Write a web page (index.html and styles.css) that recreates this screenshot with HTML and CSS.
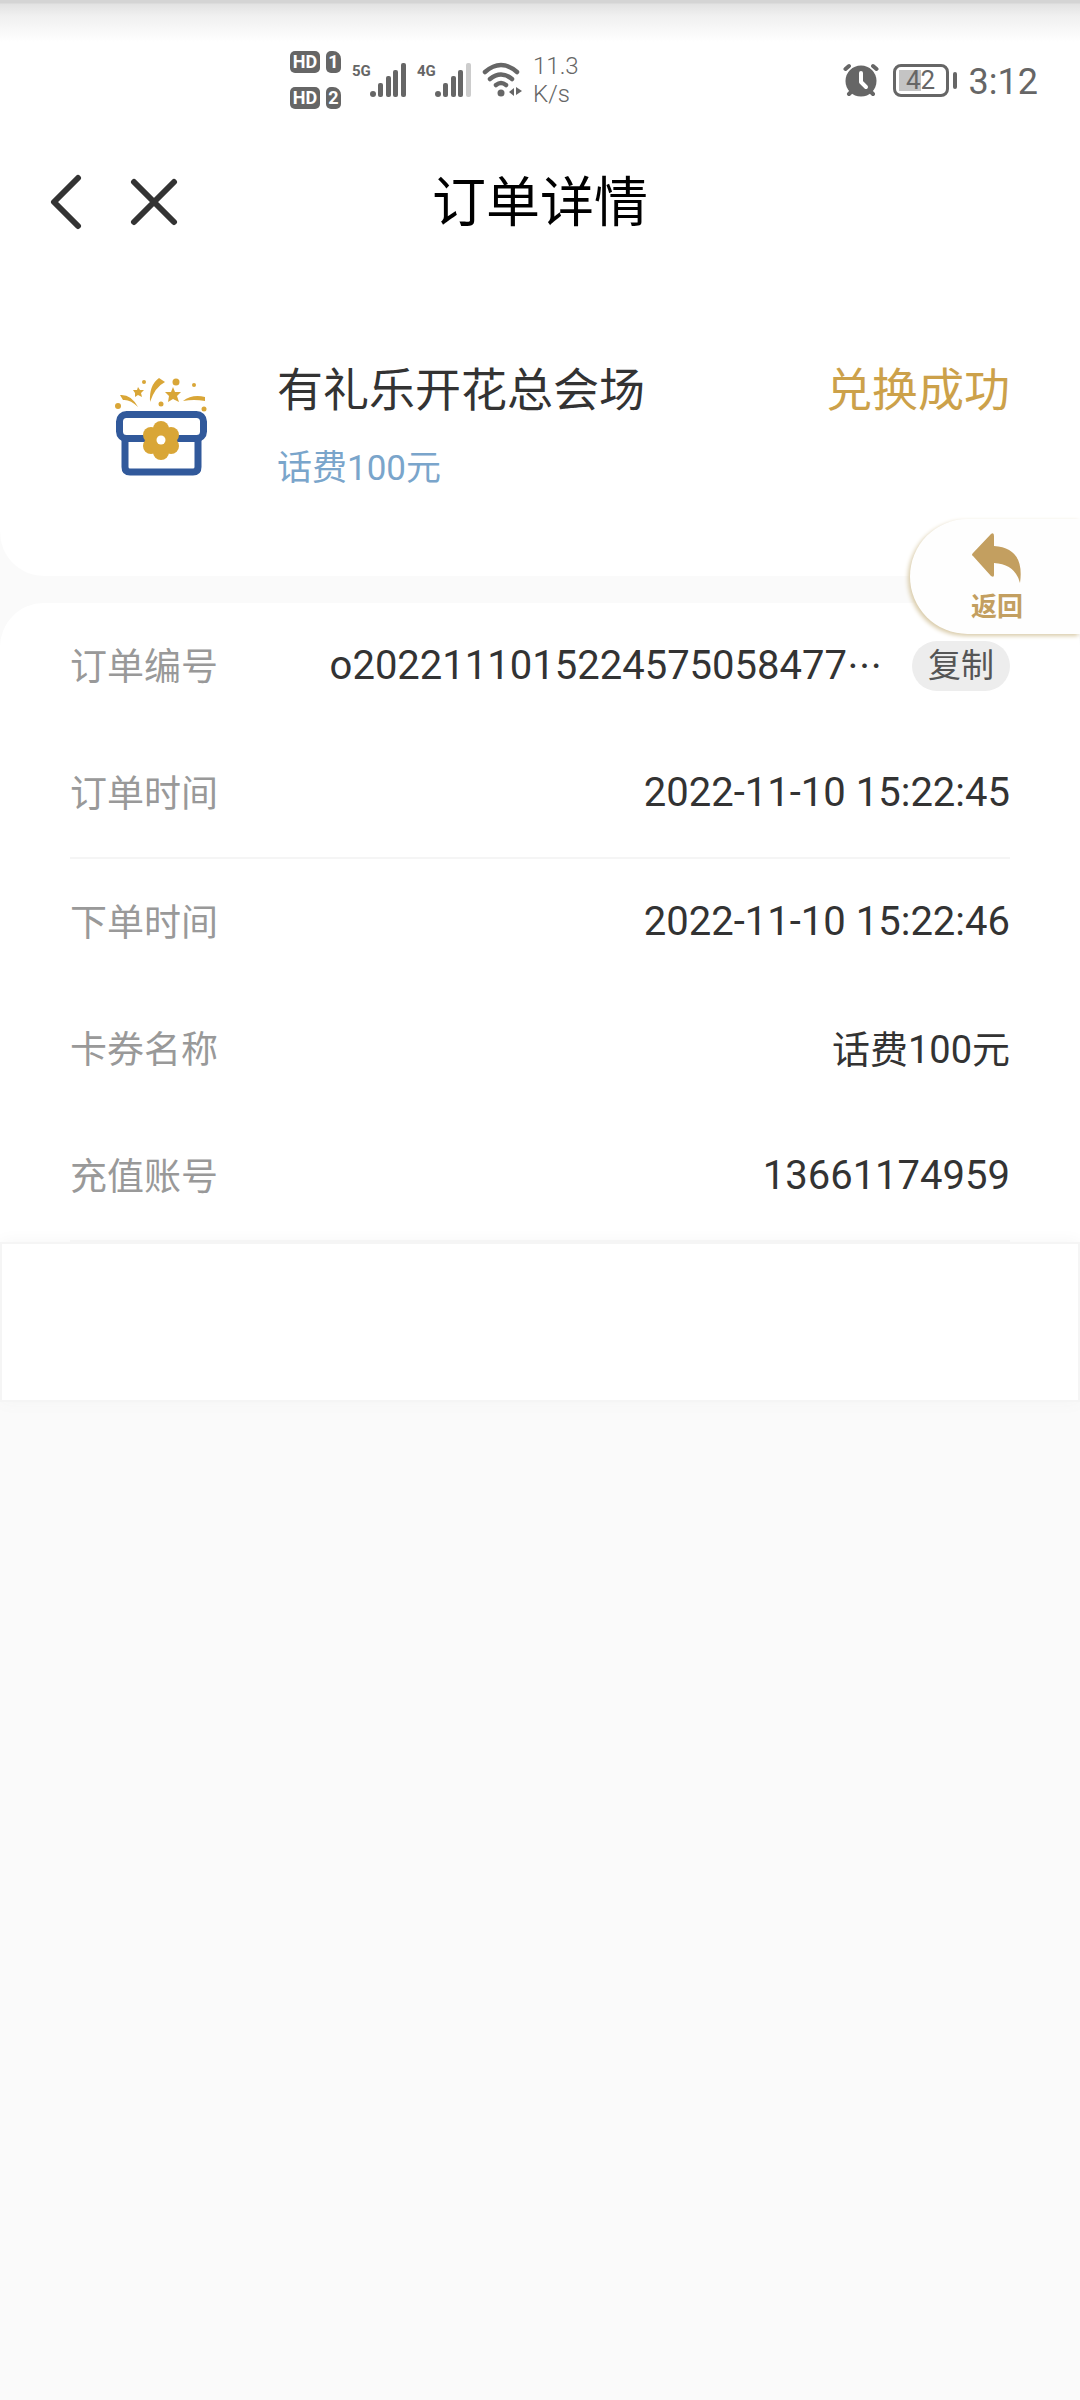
FILE: index.html
```html
<!DOCTYPE html>
<html lang="zh-CN">
<head>
<meta charset="utf-8">
<meta name="viewport" content="width=device-width, initial-scale=1">
<title>订单详情</title>
<link rel="stylesheet" href="styles.css">
</head>
<body>
<div class="top">
  <div class="status-bar">
    <div class="status-group">
      <div class="hd-list">
        <div class="hd"><span class="hd-tag">HD</span><span class="sim-tag">1</span></div>
        <div class="hd"><span class="hd-tag">HD</span><span class="sim-tag">2</span></div>
      </div>
      <div class="signal"><span class="net">5G</span>
        <svg width="36" height="34" viewBox="0 0 36 34" fill="#666"><circle cx="3" cy="31" r="3"/><rect x="8" y="20" width="5" height="14" rx="2"/><rect x="16" y="13" width="5" height="21" rx="2"/><rect x="23" y="7" width="5" height="27" rx="2"/><rect x="31" y="0" width="5" height="34" rx="2"/></svg>
      </div>
      <div class="signal"><span class="net">4G</span>
        <svg width="36" height="34" viewBox="0 0 36 34" fill="#666"><circle cx="3" cy="31" r="3"/><rect x="8" y="20" width="5" height="14" rx="2"/><rect x="16" y="13" width="5" height="21" rx="2"/><rect x="23" y="7" width="5" height="27" rx="2"/><rect x="31" y="0" width="5" height="34" rx="2" fill="#ccc"/></svg>
      </div>
      <svg width="40" height="36" viewBox="0 0 40 36" fill="none" stroke="#666" stroke-width="4.500" stroke-linecap="round"><path d="M3 10Q19-4 35 10M8 17Q19 8 30 17M14 23Q19 19 24 23"/><circle cx="19" cy="31" r="3.500" fill="#666" stroke="none"/><path d="M32 26v8l-5-4zM34 25v8l6-4z" fill="#666" stroke="none"/></svg>
      <div class="speed">11.3<br>K/s</div>
    </div>
    <div class="status-right">
      <svg width="36" height="34" viewBox="0 0 36 34"><g stroke="#666" stroke-width="4" stroke-linecap="round"><path d="M2.500 6L6 3M33.500 6L30 3M6 31l4-4M30 31l-4-4"/></g><circle cx="18" cy="18" r="15.500" fill="#666"/><path d="M18 10v9l5 5" fill="none" stroke="#fff" stroke-width="4" stroke-linecap="round" stroke-linejoin="round"/></svg>
      <div class="battery">42</div>
      <span class="clock">3:12</span>
    </div>
  </div>
  <header class="nav">
    <div class="nav-actions">
      <button class="icon-button" aria-label="后退"><svg width="32" height="56" viewBox="0 0 32 56"><path d="M28 4L4 28l24 24"/></svg></button>
      <button class="icon-button" aria-label="关闭"><svg width="48" height="48" viewBox="0 0 48 48"><path d="M4 4l40 40M44 4L4 44"/></svg></button>
    </div>
    <h1>订单详情</h1>
  </header>
  <section class="product">
    <svg class="gift" width="94" height="98" viewBox="0 0 94 98">
      <g fill="none" stroke="#31599b" stroke-width="7"><rect x="4.500" y="36.500" width="84" height="24" rx="7"/><path d="M10 60v29q0 5 5 5h63q5 0 5-5V60"/></g>
      <g fill="#d9a637"><circle cx="46" cy="51" r="8"/><circle cx="56" cy="57" r="8"/><circle cx="56" cy="68" r="8"/><circle cx="46" cy="74" r="8"/><circle cx="36" cy="68" r="8"/><circle cx="36" cy="57" r="8"/><circle cx="46" cy="62" r="13"/>
      <circle cx="3" cy="28" r="3"/><circle cx="29" cy="4" r="2"/><circle cx="61" cy="4" r="3.500"/><circle cx="79" cy="7" r="2"/><circle cx="46" cy="26" r="2.500"/><circle cx="89" cy="31" r="2.500"/>
      <path d="M5 17Q16 16 23 29Q15 21 8 22zM35 24Q34 7 44 0L50 4Q40 9 35 24zM68 23Q77 16 90 19V23Q79 21 68 23z"/>
      <path d="M58 9l2 5 6 0-4 4 2 6-6-3-5 3 1-6-4-4 6 0zM23 9l2 3 4 0-3 3 1 4-4-2-3 2 0-4-2-3 4 0z"/></g>
      <circle cx="46" cy="62" r="4.500" fill="#fff"/>
    </svg>
    <div class="product-info"><h2>有礼乐开花总会场</h2><p>话费100元</p></div>
    <strong class="result">兑换成功</strong>
  </section>
</div>
<main class="details">
  <dl>
    <div class="row"><dt>订单编号</dt><dd class="order-number"><span>o2022111015224575058477<span class="more">…</span></span><button class="copy">复制</button></dd></div>
    <div class="row last-in-group"><dt>订单时间</dt><dd>2022-11-10 15:22:45</dd></div>
    <div class="row"><dt>下单时间</dt><dd>2022-11-10 15:22:46</dd></div>
    <div class="row"><dt>卡券名称</dt><dd class="voucher">话费100元</dd></div>
    <div class="row last-in-group"><dt>充值账号</dt><dd>13661174959</dd></div>
  </dl>
</main>
<div class="blank-panel"></div>
<button class="back-float"><svg width="50" height="50" viewBox="0 0 50 50" fill="#c39f60"><path d="M1 20L19 1q3-2 3 2V13Q53 15 48 50Q43 31 22 30V42q0 3-3 1L1 23q-2-1 0-3z"/></svg><span>返回</span></button>
</body>
</html>
```
FILE: styles.css
```css
* { box-sizing: border-box; }
body {
  position: relative;
  margin: 0;
  min-height: 100vh;
  background: #fafafa;
  color: #333;
  font-family: Roboto, "Noto Sans CJK SC", sans-serif;
}
h1, h2, p, dl, dd { margin: 0; font-weight: 400; }
button { padding: 0; border: 0; background: none; font: inherit; color: inherit; }
svg { display: block; flex: none; }
.top {
  padding-bottom: 76px;
  border-radius: 0 0 44px 44px;
  background: linear-gradient(#d4d4d4 3px, #e2e2e2 4px, #f0f0f0 16px, #fff 42px);
}
.status-bar {
  display: flex;
  justify-content: space-between;
  align-items: center;
  height: 160px;
  padding: 0 42px 0 290px;
  color: #666;
}
.status-group, .status-right { display: flex; align-items: center; }
.status-group { gap: 11px; }
.hd-list { display: grid; gap: 14px; }
.hd { display: flex; gap: 6px; }
.hd-tag, .sim-tag {
  border-radius: 5px;
  background: #666;
  color: #fff;
  font-size: 18px;
  font-weight: 700;
  line-height: 22px;
  text-align: center;
}
.hd-tag { width: 30px; }
.sim-tag { width: 15px; border-top-right-radius: 8px; }
.signal { display: flex; align-items: center; }
.net { align-self: flex-start; width: 18px; font-size: 15px; font-weight: 700; line-height: 16px; }
.speed { font-size: 24px; font-weight: 300; line-height: 28px; }
.status-right { gap: 14px; }
.battery {
  position: relative;
  width: 56px;
  margin-right: 6px;
  border: 3px solid #666;
  border-radius: 8px;
  background: linear-gradient(90deg, #c4c4c4 22px, transparent 22px) 3px 3px / 44px 21px no-repeat;
  font-size: 26px;
  line-height: 27px;
  text-align: center;
}
.battery::after {
  content: "";
  position: absolute;
  top: 5px;
  right: -11px;
  width: 4px;
  height: 17px;
  border-radius: 2px;
  background: #666;
}
.clock { padding-top: 4px; font-size: 36px; line-height: 40px; }
.nav {
  display: grid;
  grid-template-columns: 1fr auto 1fr;
  align-items: center;
  height: 80px;
  padding: 0 50px;
}
.nav-actions { display: flex; align-items: center; gap: 48px; }
.icon-button svg { fill: none; stroke: #333; stroke-width: 6; stroke-linecap: round; stroke-linejoin: round; }
h1 { padding-top: 4px; color: #000; font-size: 54px; line-height: 80px; }
.product {
  display: flex;
  align-items: flex-start;
  padding: 118px 70px 0 115px;
}
.gift { margin-top: 20px; }
.product-info { flex: 1; padding-left: 68px; }
h2, .result { font-size: 46px; font-weight: 400; line-height: 64px; }
.product-info p { margin-top: 20px; padding-bottom: 4px; color: #7aa5cb; font-size: 35px; line-height: 54px; }
.result { color: #cca14a; }
.details {
  margin-top: 27px;
  padding: 0 70px;
  border-radius: 44px 44px 0 0;
  background: #fff;
}
.row {
  display: flex;
  justify-content: space-between;
  align-items: center;
  height: 127px;
}
.row dt { padding-bottom: 6px; color: #999; font-size: 37px; }
.row dd { padding-bottom: 2px; font-size: 40px; }
.row dd.voucher { padding-bottom: 6px; font-size: 38px; }
.row.last-in-group { height: 129px; border-bottom: 2px solid #f5f5f5; }
.order-number { display: flex; align-items: center; gap: 30px; }
.more { font-family: "Noto Sans CJK SC", sans-serif; font-size: 35px; line-height: 40px; }
.copy {
  width: 98px;
  border-radius: 25px;
  background: #ededed;
  color: #555;
  font-size: 33px;
  line-height: 50px;
}
.blank-panel {
  height: 160px;
  border: 2px solid #f5f5f5;
  background: #fff;
  box-shadow: 0 0 16px #f5f5f5;
}
.back-float {
  position: absolute;
  top: 519px;
  right: 0;
  display: flex;
  flex-direction: column;
  align-items: center;
  width: 170px;
  height: 115px;
  padding: 14px 0 0 4px;
  border-radius: 58px 0 0 58px;
  background: #fefefe;
  box-shadow: -2px 2px 4px #d9cba9;
  color: #c39f60;
  font-size: 26px;
  font-weight: 700;
}
.back-float span { margin-top: 6px; line-height: 36px; }
```
